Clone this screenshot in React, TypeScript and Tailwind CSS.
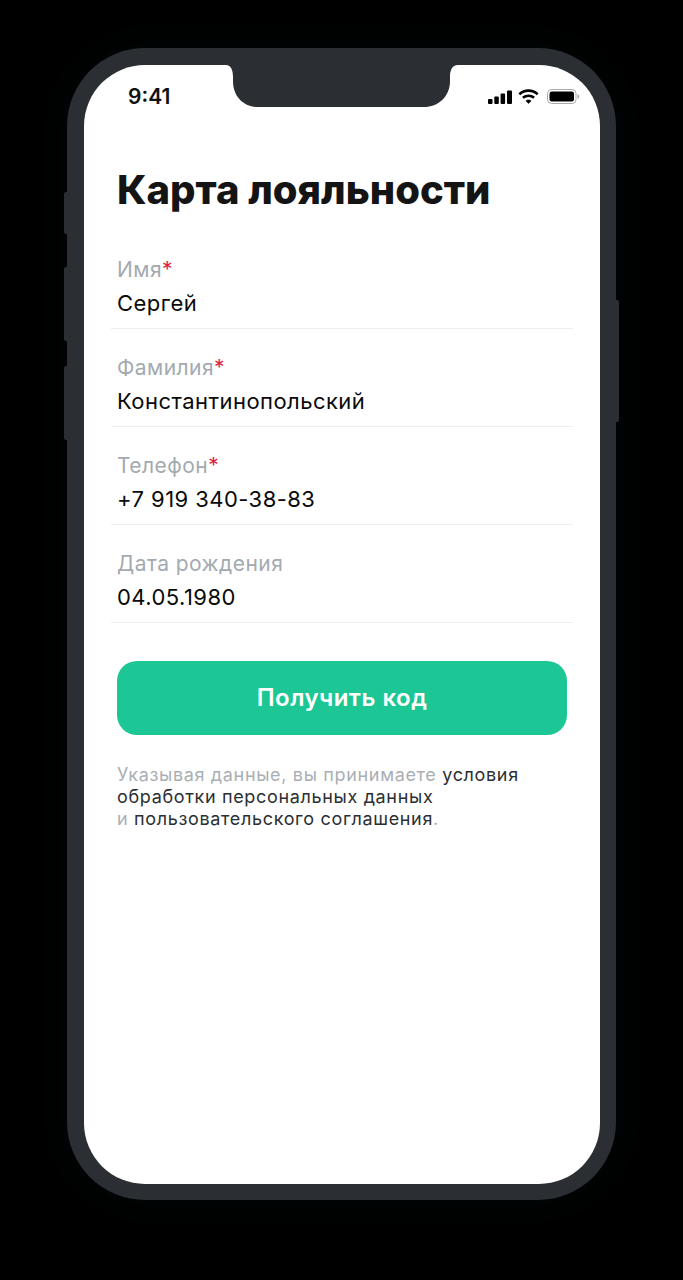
const fields = [
  { label: 'Имя', value: 'Сергей', required: true },
  { label: 'Фамилия', value: 'Константинопольский', required: true },
  { label: 'Телефон', value: '+7 919 340-38-83', required: true },
  { label: 'Дата рождения', value: '04.05.1980', required: false },
]

function StatusIcons() {
  return (
    <div className="flex items-center gap-[6px]">
      <svg width="24" height="14" viewBox="0 0 24 14" fill="#000">
        <rect x="0" y="9" width="4.5" height="5" rx="1" />
        <rect x="6.3" y="6.5" width="4.5" height="7.5" rx="1" />
        <rect x="12.6" y="3.5" width="4.5" height="10.5" rx="1" />
        <rect x="19" y="0.5" width="5" height="13.5" rx="1" />
      </svg>
      <svg width="21" height="15" viewBox="0 0 21 15" fill="none" stroke="#000" strokeWidth="2.6">
        <path d="M1.3 5.2C6.6 0.4 14.4 0.4 19.7 5.2" />
        <path d="M4.9 8.8C8.1 6 12.9 6 16.1 8.8" />
        <path d="M10.5 14.4L7.9 11.8C9.4 10.6 11.6 10.6 13.1 11.8Z" fill="#000" strokeWidth="0.6" />
      </svg>
      <svg className="ml-[2px]" width="33" height="15" viewBox="0 0 33 15" fill="none">
        <rect x="0.5" y="0.5" width="28.5" height="14" rx="4" stroke="#a9a9a9" />
        <rect x="2.5" y="2.5" width="24.5" height="10" rx="2.2" fill="#000" />
        <path d="M30.5 5.2C31.6 5.6 32.3 6.4 32.3 7.5C32.3 8.6 31.6 9.4 30.5 9.8Z" fill="#a9a9a9" />
      </svg>
    </div>
  )
}

export default function App() {
  return (
    <div className="h-[1280px] w-[683px] overflow-hidden bg-black pl-[67px] pt-[48px] font-['Inter',sans-serif]">
      <div className="relative h-[1152px] w-[549px] rounded-[78px] bg-[#2b2f33] pb-[16px] pl-[17px] pr-[16px] pt-[17px] shadow-[0_0_40px_rgba(0,30,30,0.25)]">
        <div className="absolute left-[-3px] top-[144px] h-[42px] w-[3px] rounded-l-[2px] bg-[#2b2f33]" />
        <div className="absolute left-[-3px] top-[219px] h-[74px] w-[3px] rounded-l-[2px] bg-[#2b2f33]" />
        <div className="absolute left-[-3px] top-[318px] h-[74px] w-[3px] rounded-l-[2px] bg-[#2b2f33]" />
        <div className="absolute right-[-3px] top-[252px] h-[122px] w-[3px] rounded-r-[2px] bg-[#2b2f33]" />

        <div className="relative h-full w-full overflow-hidden rounded-[61px] bg-white">
          {/* notch */}
          <svg className="absolute left-[142px] top-0" width="232" height="42" viewBox="0 0 232 42" fill="#2b2f33">
            <path d="M0 0H232C226 0 224 5 224 12V16C224 32 212 42 198 42H32C18 42 7 32 7 16V12C7 5 5 0 0 0Z" />
          </svg>

          <div className="flex h-[45px] items-center justify-between pl-[44px] pr-[20px] pt-[18px]">
            <span className="text-[21px] font-semibold leading-[24px] text-[#111]">9:41</span>
            <StatusIcons />
          </div>

          <div className="px-[33px] pt-[56px]">
            <h1 className="text-[40px] font-extrabold leading-[48px] text-[#141414]">Карта лояльности</h1>

            <div className="mt-[43px] flex flex-col">
              {fields.map((f) => (
                <div key={f.label} className="-mx-[6px] h-[98px] border-b border-[#eceef0] px-[6px] pt-[27px] first:h-[72px] first:pt-[1px]">
                  <div className="text-[21px] leading-[24px] tracking-[0.45px] text-[#a3aab0]">
                    {f.label}
                    {f.required && <span className="font-normal text-[#e0203c]">*</span>}
                  </div>
                  <div className="mt-[8px] text-[22px] leading-[26px] tracking-[0.45px] text-[#0a0a0a]">{f.value}</div>
                </div>
              ))}
            </div>

            <button className="mt-[38px] flex h-[74px] w-[450px] items-center justify-center rounded-[20px] bg-[#1cc795] text-[24px] font-semibold tracking-[0.5px] text-white">
              Получить код
            </button>

            <p className="mt-[29px] text-[18px] leading-[22px] tracking-[0.66px] text-[#a9afb5]">
              Указывая данные, вы принимаете <span className="text-[#2b2f33]">условия</span>
              <br />
              <span className="text-[#2b2f33]">обработки персональных данных</span>
              <br />
              и <span className="text-[#2b2f33]">пользовательского соглашения</span>.
            </p>
          </div>
        </div>
      </div>
    </div>
  )
}
